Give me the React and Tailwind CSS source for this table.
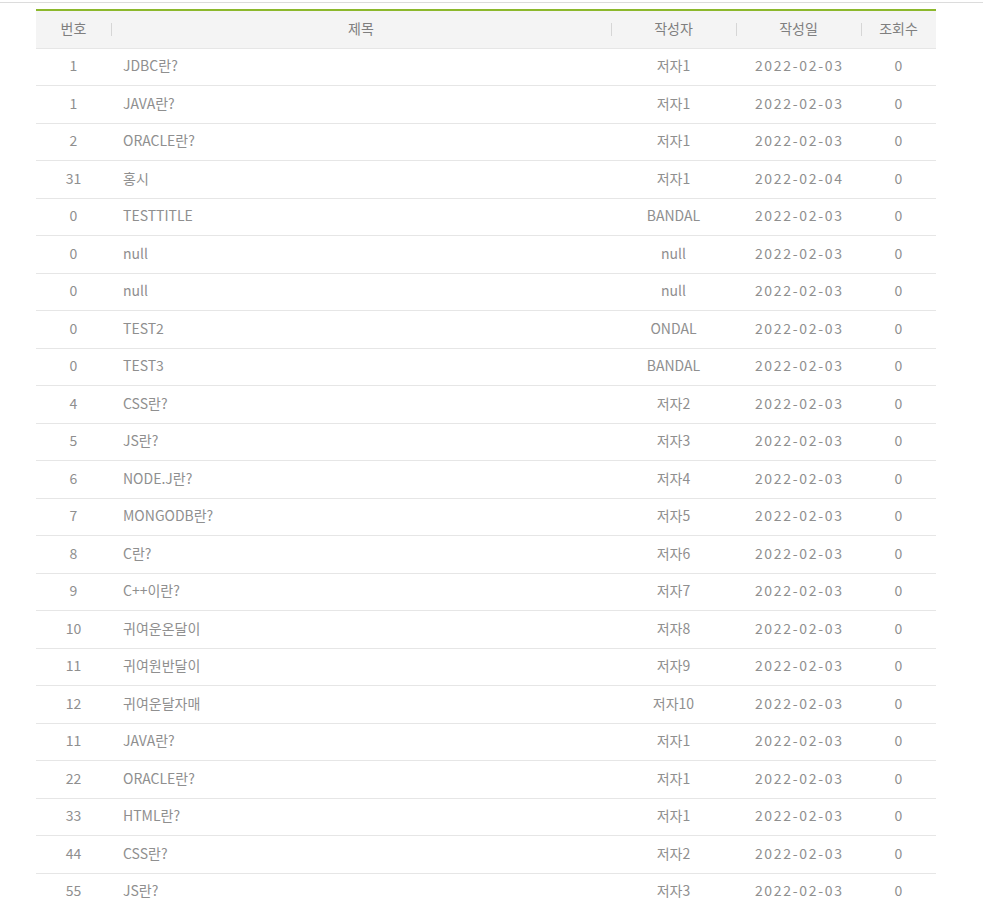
import React from "react";

const rows = [
  ["1", "JDBC란?", "저자1", "2022-02-03", "0"],
  ["1", "JAVA란?", "저자1", "2022-02-03", "0"],
  ["2", "ORACLE란?", "저자1", "2022-02-03", "0"],
  ["31", "홍시", "저자1", "2022-02-04", "0"],
  ["0", "TESTTITLE", "BANDAL", "2022-02-03", "0"],
  ["0", "null", "null", "2022-02-03", "0"],
  ["0", "null", "null", "2022-02-03", "0"],
  ["0", "TEST2", "ONDAL", "2022-02-03", "0"],
  ["0", "TEST3", "BANDAL", "2022-02-03", "0"],
  ["4", "CSS란?", "저자2", "2022-02-03", "0"],
  ["5", "JS란?", "저자3", "2022-02-03", "0"],
  ["6", "NODE.J란?", "저자4", "2022-02-03", "0"],
  ["7", "MONGODB란?", "저자5", "2022-02-03", "0"],
  ["8", "C란?", "저자6", "2022-02-03", "0"],
  ["9", "C++이란?", "저자7", "2022-02-03", "0"],
  ["10", "귀여운온달이", "저자8", "2022-02-03", "0"],
  ["11", "귀여원반달이", "저자9", "2022-02-03", "0"],
  ["12", "귀여운달자매", "저자10", "2022-02-03", "0"],
  ["11", "JAVA란?", "저자1", "2022-02-03", "0"],
  ["22", "ORACLE란?", "저자1", "2022-02-03", "0"],
  ["33", "HTML란?", "저자1", "2022-02-03", "0"],
  ["44", "CSS란?", "저자2", "2022-02-03", "0"],
  ["55", "JS란?", "저자3", "2022-02-03", "0"],
];

function HeadCell({ children, sep }) {
  return (
    <div className="relative flex items-center justify-center h-full pb-[2px]">
      {sep && <span className="absolute left-0 top-[12px] h-[13px] w-px bg-[#d6d6d6]" />}
      {children}
    </div>
  );
}

export default function App() {
  return (
    <div className="min-h-screen bg-white pt-[2px] font-['Noto_Sans_CJK_KR',sans-serif] text-[14px]">
      <div className="border-t border-[#dcdcdc]" />
      <div className="ml-[36px] mt-[6px] w-[900px] border-t-2 border-[#8cb82c]">
        <div className="grid h-[37.5px] grid-cols-[75px_500px_125px_125px_75px] border-b border-[#e6e6e6] bg-[#f4f4f4] text-[#7f7f7f]">
          <HeadCell>번호</HeadCell>
          <HeadCell sep>제목</HeadCell>
          <HeadCell sep>작성자</HeadCell>
          <HeadCell sep>작성일</HeadCell>
          <HeadCell sep>조회수</HeadCell>
        </div>
        {rows.map((r, i) => (
          <div
            key={i}
            className="grid h-[37.5px] grid-cols-[75px_500px_125px_125px_75px] items-center border-b border-[#e6e6e6] pb-[2px] text-[#8f8f8f]"
          >
            <div className="text-center">{r[0]}</div>
            <div className="pl-[12px]">{r[1]}</div>
            <div className="text-center">{r[2]}</div>
            <div className="text-center tracking-[1.7px] pl-[1.7px]">{r[3]}</div>
            <div className="text-center">{r[4]}</div>
          </div>
        ))}
      </div>
    </div>
  );
}
